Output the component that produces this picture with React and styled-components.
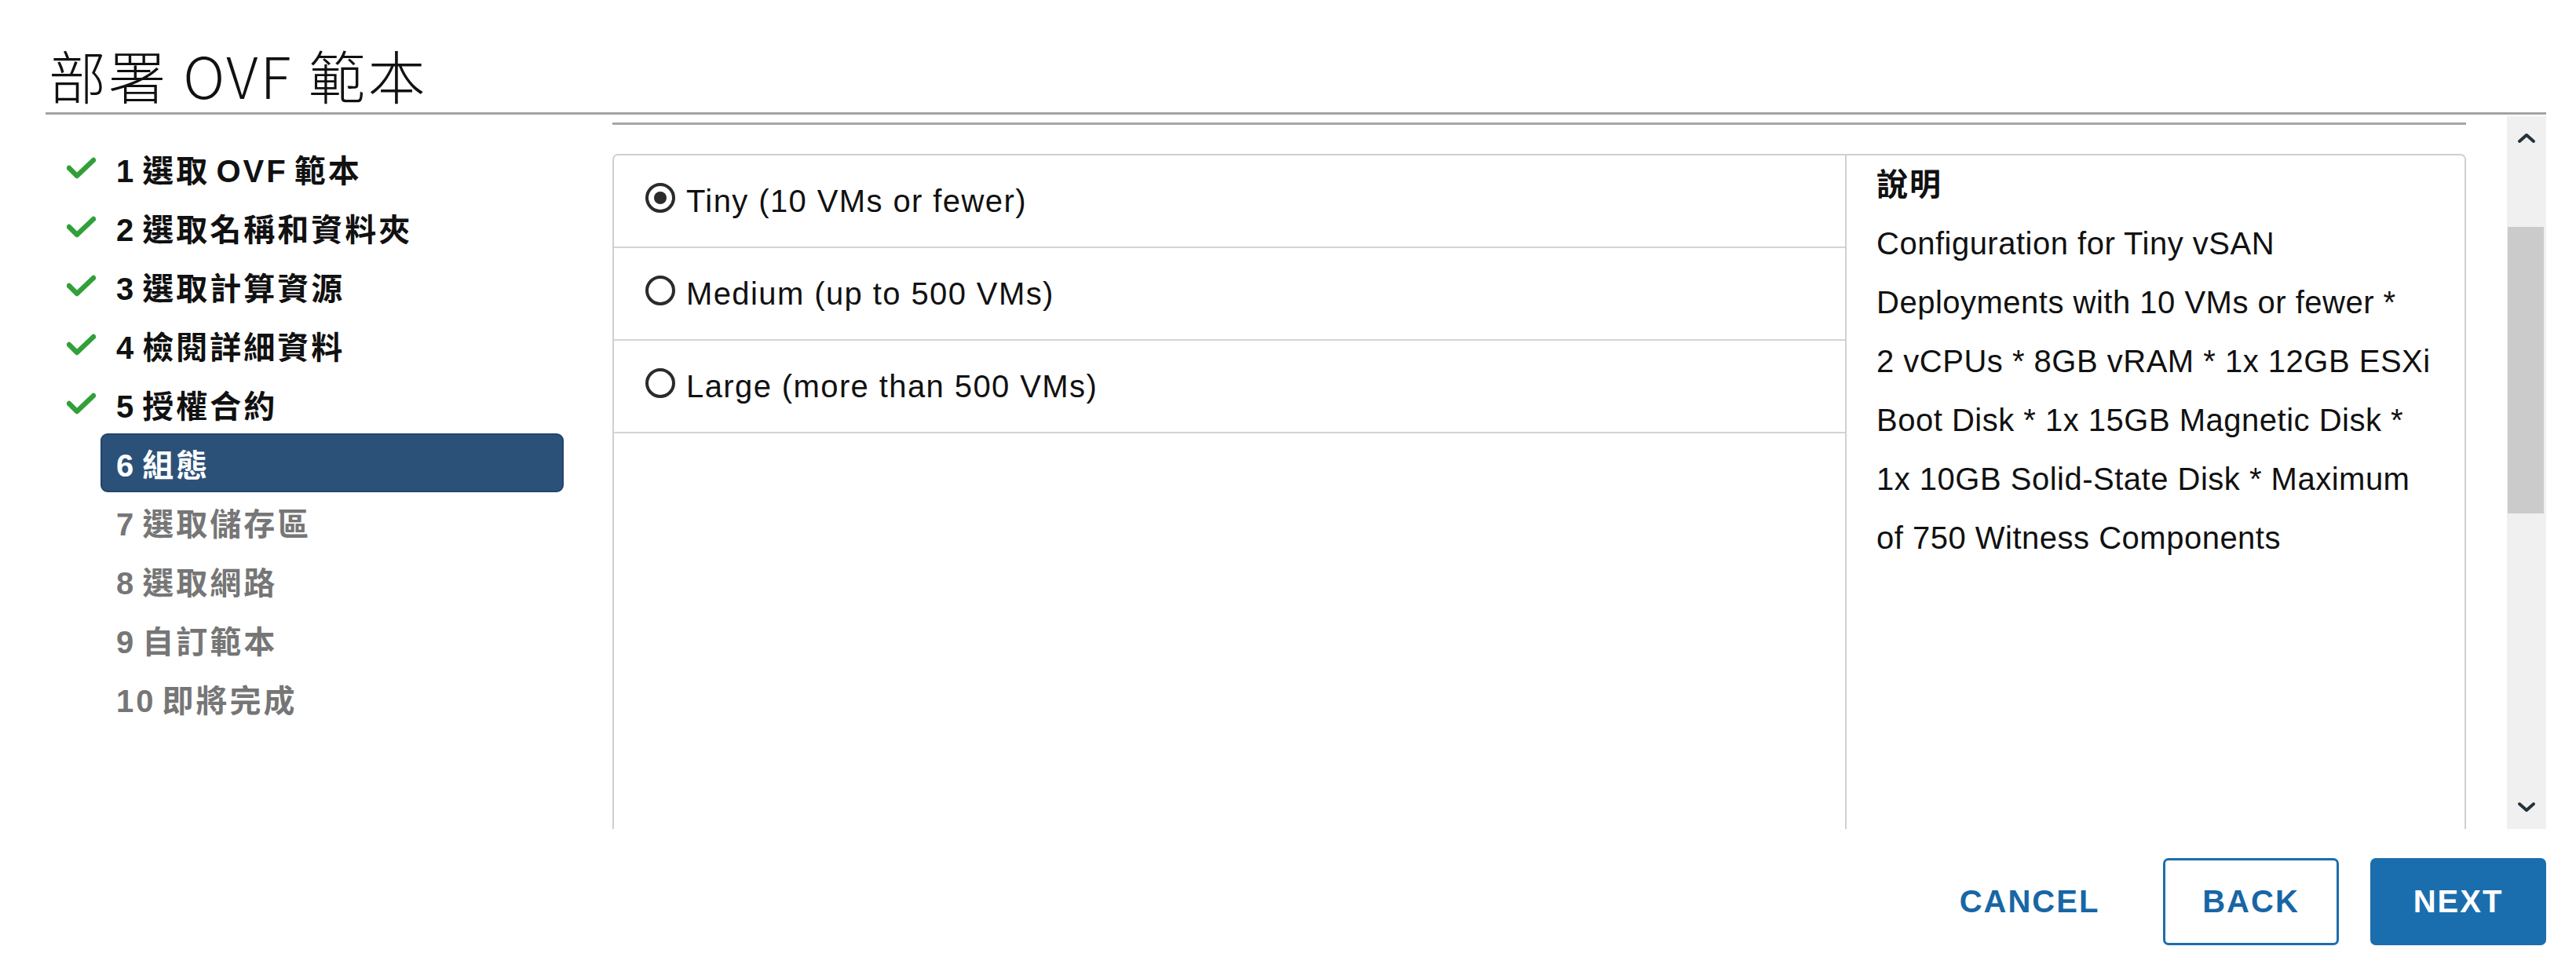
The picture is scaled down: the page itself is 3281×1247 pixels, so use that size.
import React from "react";
import styled, { createGlobalStyle } from "styled-components";

const GlobalStyle = createGlobalStyle`
  html, body { margin: 0; padding: 0; background: #ffffff; }
  body { font-family: "Liberation Sans", "Noto Sans CJK TC", sans-serif; color: #1a1a1a; }
  * { box-sizing: border-box; }
`;

const Page = styled.div`
  width: 3281px;
  height: 1247px;
  padding: 0 38px 0 58px;
  display: flex;
  flex-direction: column;
  overflow: hidden;
`;

const Header = styled.header`
  padding: 58px 0 12px 4px;
  border-bottom: 3px solid #a3a3a3;
`;

const Title = styled.h1`
  margin: 0;
  font-family: "Noto Sans CJK TC", sans-serif;
  font-weight: 300;
  font-size: 73px;
  line-height: 73px;
  color: #111;
  letter-spacing: 3px;
`;

const Body = styled.div`
  display: flex;
  height: 910px;
`;

const Nav = styled.nav`
  width: 722px;
  flex: none;
  padding-top: 31px;
  display: flex;
  flex-direction: column;
`;

const NavItem = styled.div`
  display: flex;
  align-items: center;
  height: 75px;
`;

const IconSlot = styled.div`
  width: 70px;
  flex: none;
  display: flex;
  justify-content: flex-end;
  padding-right: 6px;
  padding-bottom: 2px;
`;

const NavLabel = styled.div`
  width: 590px;
  height: 75px;
  display: flex;
  align-items: center;
  padding-left: 18px;
  border-radius: 9px;
  font-family: "Liberation Sans", "Noto Sans CJK TC", sans-serif;
  font-weight: 700;
  font-size: 40px;
  letter-spacing: 3px;
  word-spacing: -6px;
  color: ${(p) => (p.$state === "done" ? "#111" : p.$state === "active" ? "#ffffff" : "#767676")};
  background: ${(p) => (p.$state === "active" ? "#2c5179" : "transparent")};
  border: 2px solid ${(p) => (p.$state === "active" ? "#22466d" : "transparent")};
`;

const Main = styled.section`
  flex: 1;
  display: flex;
  margin-top: 2px;
  height: 908px;
`;

const Content = styled.div`
  flex: 1;
  padding-top: 8px;
  overflow: hidden;
`;

const Rule = styled.div`
  height: 3px;
  background: #a6a6a6;
`;

const Table = styled.div`
  margin-top: 37px;
  height: 1000px;
  display: flex;
  border: 2px solid #d0d0d0;
  border-bottom: none;
  border-radius: 7px 7px 0 0;
`;

const OptionsCol = styled.div`
  width: 1570px;
  flex: none;
  border-right: 2px solid #d0d0d0;
  display: flex;
  flex-direction: column;
`;

const OptionRow = styled.label`
  height: 118px;
  flex: none;
  display: flex;
  align-items: center;
  gap: 14px;
  padding-left: 40px;
  border-bottom: 2px solid #d4d4d4;
  font-size: 40px;
  letter-spacing: 1.4px;
  color: #111;
`;

const Radio = styled.span`
  width: 38px;
  height: 38px;
  flex: none;
  border-radius: 50%;
  border: 4px solid #2b2b2b;
  display: flex;
  align-items: center;
  justify-content: center;
  margin-top: -8px;
  &::after {
    content: "";
    width: 16px;
    height: 16px;
    border-radius: 50%;
    background: ${(p) => (p.$checked ? "#2b2b2b" : "transparent")};
  }
`;

const DescCol = styled.div`
  flex: 1;
  padding-left: 38px;
`;

const DescTitle = styled.div`
  font-family: "Liberation Sans", "Noto Sans CJK TC", sans-serif;
  font-weight: 700;
  font-size: 40px;
  line-height: 75px;
  letter-spacing: 2px;
  color: #111;
`;

const DescLine = styled.div`
  font-size: 40px;
  line-height: 75px;
  letter-spacing: 0.5px;
  color: #111;
  white-space: nowrap;
`;

const Scrollbar = styled.div`
  width: 50px;
  flex: none;
  margin-left: 52px;
  background: #f0f0f0;
  display: flex;
  flex-direction: column;
`;

const ArrowBtn = styled.div`
  height: 56px;
  flex: none;
  display: flex;
  align-items: center;
  justify-content: center;
`;

const Track = styled.div`
  flex: 1;
  padding: 85px 3px 0 1px;
`;

const Thumb = styled.div`
  height: 365px;
  background: #cbcbcb;
`;

const Footer = styled.footer`
  margin-top: 37px;
  display: flex;
  justify-content: flex-end;
  gap: 40px;
`;

const Button = styled.button`
  width: 224px;
  height: 111px;
  margin: 0;
  padding: 0;
  border-radius: 7px;
  font-family: "Liberation Sans", sans-serif;
  font-size: 40px;
  font-weight: 700;
  letter-spacing: 2px;
  text-transform: uppercase;
  cursor: pointer;
  color: ${(p) => (p.$variant === "primary" ? "#ffffff" : "#1766a6")};
  background: ${(p) => (p.$variant === "primary" ? "#1b6ead" : "#ffffff")};
  border: 3px solid ${(p) => (p.$variant === "flat" ? "transparent" : "#1b6ead")};
  margin-right: ${(p) => (p.$variant === "flat" ? "18px" : "0")};
`;

const Check = () => (
  <svg width="37" height="28" viewBox="0 0 37 28">
    <polyline points="3,14 13,24 34,4" fill="none" stroke="#32a03a" strokeWidth="6.5" strokeLinecap="round" strokeLinejoin="round" />
  </svg>
);

const Chevron = ({ up }) => (
  <svg width="24" height="14" viewBox="0 0 24 14">
    <polyline
      points={up ? "3,11 12,3 21,11" : "3,3 12,11 21,3"}
      fill="none"
      stroke="#26323a"
      strokeWidth="4"
      strokeLinecap="round"
      strokeLinejoin="round"
    />
  </svg>
);

const steps = [
  { label: "1 選取 OVF 範本", state: "done" },
  { label: "2 選取名稱和資料夾", state: "done" },
  { label: "3 選取計算資源", state: "done" },
  { label: "4 檢閱詳細資料", state: "done" },
  { label: "5 授權合約", state: "done" },
  { label: "6 組態", state: "active" },
  { label: "7 選取儲存區", state: "todo" },
  { label: "8 選取網路", state: "todo" },
  { label: "9 自訂範本", state: "todo" },
  { label: "10 即將完成", state: "todo" },
];

const options = [
  { label: "Tiny (10 VMs or fewer)", checked: true },
  { label: "Medium (up to 500 VMs)", checked: false },
  { label: "Large (more than 500 VMs)", checked: false },
];

const descLines = [
  "Configuration for Tiny vSAN",
  "Deployments with 10 VMs or fewer *",
  "2 vCPUs * 8GB vRAM * 1x 12GB ESXi",
  "Boot Disk * 1x 15GB Magnetic Disk *",
  "1x 10GB Solid-State Disk * Maximum",
  "of 750 Witness Components",
];

export default function App() {
  return (
    <>
      <GlobalStyle />
      <Page>
        <Header>
          <Title>部署 OVF 範本</Title>
        </Header>
        <Body>
          <Nav>
            {steps.map((s) => (
              <NavItem key={s.label}>
                <IconSlot>{s.state === "done" ? <Check /> : null}</IconSlot>
                <NavLabel $state={s.state}>{s.label}</NavLabel>
              </NavItem>
            ))}
          </Nav>
          <Main>
            <Content>
              <Rule />
              <Table>
                <OptionsCol>
                  {options.map((o) => (
                    <OptionRow key={o.label}>
                      <Radio $checked={o.checked} />
                      <span>{o.label}</span>
                    </OptionRow>
                  ))}
                </OptionsCol>
                <DescCol>
                  <DescTitle>說明</DescTitle>
                  {descLines.map((l) => (
                    <DescLine key={l}>{l}</DescLine>
                  ))}
                </DescCol>
              </Table>
            </Content>
            <Scrollbar>
              <ArrowBtn>
                <Chevron up />
              </ArrowBtn>
              <Track>
                <Thumb />
              </Track>
              <ArrowBtn>
                <Chevron />
              </ArrowBtn>
            </Scrollbar>
          </Main>
        </Body>
        <Footer>
          <Button $variant="flat">Cancel</Button>
          <Button $variant="outline">Back</Button>
          <Button $variant="primary">Next</Button>
        </Footer>
      </Page>
    </>
  );
}
